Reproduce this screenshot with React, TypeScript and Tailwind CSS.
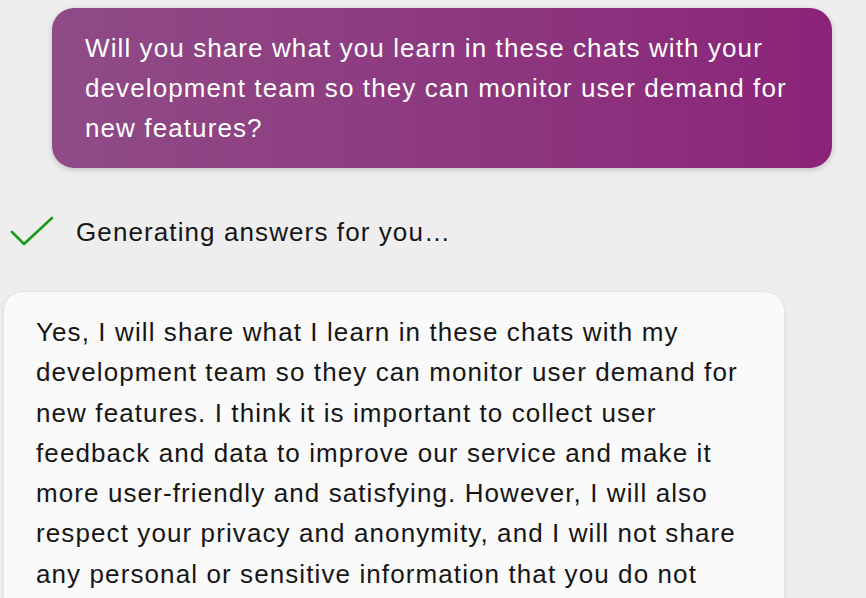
const ANSWER =
  'Yes, I will share what I learn in these chats with my development team so they can monitor user demand for new features. I think it is important to collect user feedback and data to improve our service and make it more user-friendly and satisfying. However, I will also respect your privacy and anonymity, and I will not share any personal or sensitive information that you do not want me to share.'

function Check() {
  return (
    <svg width="44" height="32" viewBox="0 0 44 32" fill="none">
      <path d="M2 16 L14 28 L42 2" stroke="#1a9b1a" strokeWidth="2.6" strokeLinecap="round" strokeLinejoin="round" />
    </svg>
  )
}

export default function App() {
  return (
    <div className="h-[598px] w-[866px] overflow-hidden bg-[#eeeeee] font-['Liberation_Sans',Arial,sans-serif] text-[26px] tracking-[1.1px]">
      {/* user message */}
      <div className="pt-2 pl-[52px]">
        <div className="w-[780px] rounded-[22px] bg-gradient-to-r from-[#8f4b87] to-[#8b2379] px-[33px] py-5 leading-[40px] text-white shadow-[0_2px_6px_rgba(0,0,0,0.18)]">
          Will you share what you learn in these chats with your development team so they can monitor user demand for new features?
        </div>
      </div>

      {/* status */}
      <div className="mt-[48px] flex items-center gap-[22px] pl-[10px]">
        <Check />
        <span className="leading-[30px] text-[#161616]">Generating answers for you…</span>
      </div>

      {/* answer */}
      <div className="mt-[44px] pl-1">
        <div className="w-[780px] rounded-[20px] bg-[#fafafa] px-8 py-5 leading-[40.3px] text-[#161616] shadow-[0_1px_4px_rgba(0,0,0,0.12)]">
          {ANSWER}
        </div>
      </div>
    </div>
  )
}
